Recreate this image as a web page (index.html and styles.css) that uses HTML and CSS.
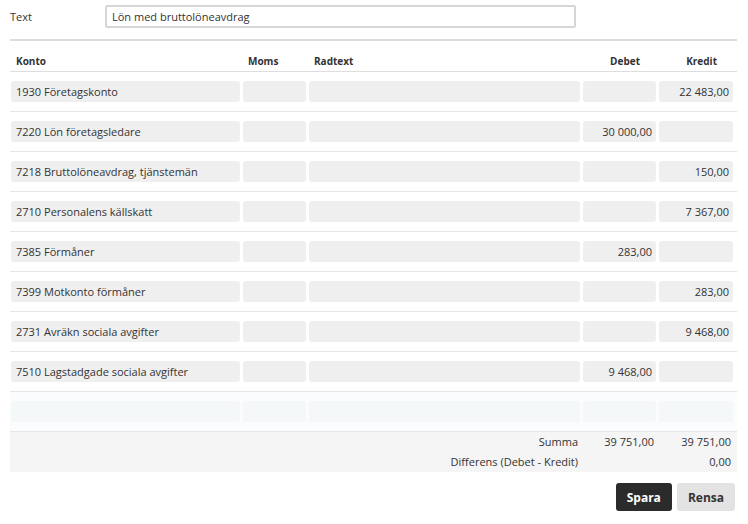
FILE: index.html
```html
<!DOCTYPE html>
<html lang="sv">
<head>
	<meta charset="UTF-8">
	<title>Verifikation</title>
	<link rel="stylesheet" href="styles.css">
</head>
<body>
	<div class="wrp">
		<div class="frm">
			<label class="lbl" for="txt">Text</label>
			<input class="inp" id="txt" type="text" value="Lön med bruttolöneavdrag">
		</div>
		<div class="tbl">
			<div class="row hd">
				<div class="c">Konto</div>
				<div class="c">Moms</div>
				<div class="c">Radtext</div>
				<div class="c num">Debet</div>
				<div class="c num">Kredit</div>
			</div>
			<div class="row">
				<div class="c">1930 Företagskonto</div><div class="c"></div><div class="c"></div><div class="c num"></div><div class="c num">22 483,00</div>
			</div>
			<div class="row">
				<div class="c">7220 Lön företagsledare</div><div class="c"></div><div class="c"></div><div class="c num">30 000,00</div><div class="c num"></div>
			</div>
			<div class="row">
				<div class="c">7218 Bruttolöneavdrag, tjänstemän</div><div class="c"></div><div class="c"></div><div class="c num"></div><div class="c num">150,00</div>
			</div>
			<div class="row">
				<div class="c">2710 Personalens källskatt</div><div class="c"></div><div class="c"></div><div class="c num"></div><div class="c num">7 367,00</div>
			</div>
			<div class="row">
				<div class="c">7385 Förmåner</div><div class="c"></div><div class="c"></div><div class="c num">283,00</div><div class="c num"></div>
			</div>
			<div class="row">
				<div class="c">7399 Motkonto förmåner</div><div class="c"></div><div class="c"></div><div class="c num"></div><div class="c num">283,00</div>
			</div>
			<div class="row">
				<div class="c">2731 Avräkn sociala avgifter</div><div class="c"></div><div class="c"></div><div class="c num"></div><div class="c num">9 468,00</div>
			</div>
			<div class="row">
				<div class="c">7510 Lagstadgade sociala avgifter</div><div class="c"></div><div class="c"></div><div class="c num">9 468,00</div><div class="c num"></div>
			</div>
			<div class="row new">
				<div class="c"></div><div class="c"></div><div class="c"></div><div class="c"></div><div class="c"></div>
			</div>
			<div class="sum">
				<div class="srow">
					<div class="slbl">Summa</div><div class="sval">39 751,00</div><div class="sval">39 751,00</div>
				</div>
				<div class="srow">
					<div class="slbl">Differens (Debet - Kredit)</div><div class="sval"></div><div class="sval">0,00</div>
				</div>
			</div>
		</div>
		<div class="btns">
			<button class="btn dark">Spara</button>
			<button class="btn">Rensa</button>
		</div>
	</div>
</body>
</html>
```
FILE: styles.css
```css
html,body{
	margin: 0;
	padding: 0;
	background: #fff;
}
body{
	font-family: "Open Sans", "Liberation Sans", sans-serif;
	font-size: 11px;
	color: #333;
}
.wrp{
	width: 727px;
	padding: 5px 0 0 10px;
}
.frm{
	display: flex;
	align-items: flex-start;
	height: 34px;
	border-bottom: 2px solid #dcdcdc;
}
.lbl{
	width: 95px;
	padding-top: 4px;
	line-height: 16px;
}
.inp{
	box-sizing: border-box;
	width: 471px;
	height: 23px;
	margin: 0;
	padding: 0 5px;
	border: 2px solid #d6d6d6;
	border-radius: 2px;
	font-family: inherit;
	font-size: 11px;
	color: #333;
	outline: none;
}
.row{
	display: grid;
	grid-template-columns: 229px 63px 271px 73px 74px;
	column-gap: 3px;
	padding: 9px 4px 9px 1px;
	border-bottom: 1px solid #e6e6e6;
}
.c{
	height: 21px;
	line-height: 21px;
	padding: 0 5px;
	background: #efefef;
	border-radius: 3px;
	white-space: nowrap;
}
.num{
	text-align: right;
	padding-right: 4px;
}
.hd{
	padding: 11px 4px 0 1px;
	border-bottom: 1px solid #dedede;
}
.hd .c{
	height: 19px;
	line-height: 19px;
	background: none;
	font-weight: bold;
	font-size: 10px;
}
.hd .num{padding-right: 16px;}
.new{background: #fbfcfd;}
.new .c{background: #f4f8f9;}
.sum{
	background: #f5f5f5;
	padding: 0 6px 0 0;
}
.srow{
	display: flex;
	height: 20px;
	line-height: 20px;
}
.slbl{
	width: 568px;
	text-align: right;
}
.sval{
	width: 76px;
	text-align: right;
}
.sval:last-child{width: 77px;}
.btns{
	display: flex;
	justify-content: flex-end;
	gap: 5px;
	margin-top: 11px;
	padding-right: 2px;
}
.btn{
	height: 28px;
	padding: 0 11px;
	border: none;
	border-radius: 3px;
	background: #e3e3e3;
	color: #333;
	font-family: inherit;
	font-size: 12px;
	font-weight: bold;
}
.btn.dark{
	background: #2b2b2b;
	color: #fff;
}
```
